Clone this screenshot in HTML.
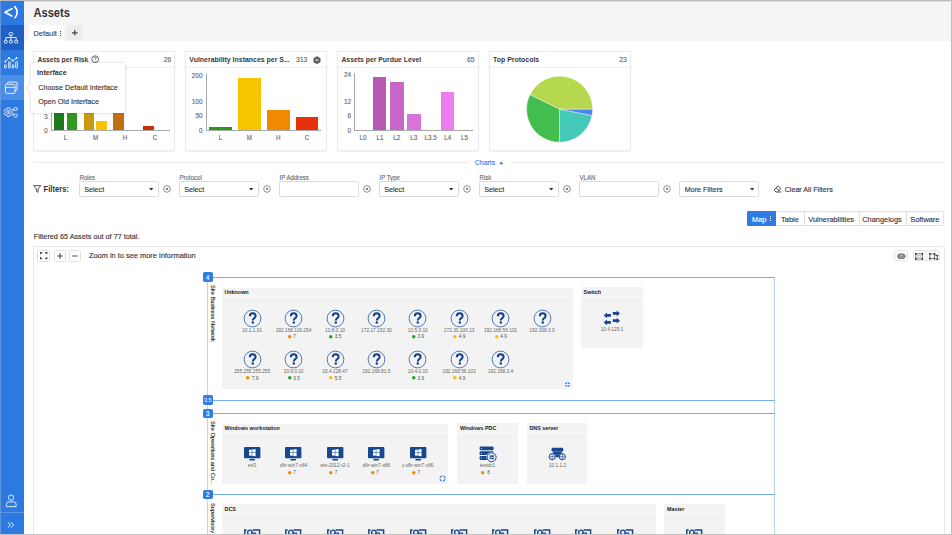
<!DOCTYPE html>
<html><head><meta charset="utf-8"><style>
html,body{margin:0;padding:0;width:952px;height:535px;overflow:hidden;background:#fff;position:relative;font-family:"Liberation Sans",sans-serif}
.t{position:absolute;white-space:nowrap;font-family:"Liberation Sans",sans-serif}
svg{overflow:visible}
</style></head><body>
<div style="position:absolute;left:23.30px;top:0.00px;width:930.00px;height:41.00px;background:#f5f5f5"></div>
<div style="position:absolute;left:0.00px;top:0.00px;width:23.60px;height:535.00px;background:#2c79e2"></div>
<div style="position:absolute;left:0.00px;top:25.00px;width:23.60px;height:25.00px;background:#1f60c4"></div>
<div style="position:absolute;left:0.00px;top:75.30px;width:23.60px;height:24.50px;background:#4a8ee8"></div>
<div style="position:absolute;left:0.00px;top:511.60px;width:23.60px;height:0.80px;background:#5a98ea"></div>
<div style="position:absolute;left:0.00px;top:0.00px;width:1.00px;height:535.00px;background:#5f97de"></div>
<div class="t" style="left:33.50px;top:8px;font-size:11.1px;line-height:11.1px;color:#333;font-weight:bold;transform:scaleY(1.16);transform-origin:0 9px;">Assets</div>
<div style="position:absolute;left:28.90px;top:25.20px;width:35.00px;height:16.30px;background:#fff"></div>
<div style="position:absolute;left:67.20px;top:25.20px;width:15.20px;height:15.30px;background:#ececec"></div>
<div class="t" style="left:33.50px;top:30px;font-size:7.4px;line-height:7.4px;color:#444;font-weight:normal;transform:scaleY(1.08);transform-origin:0 6px;-webkit-text-stroke:0.12px #444;">Default</div>
<div style="position:absolute;left:60.00px;top:31.00px;width:1.00px;height:1.00px;background:#444"></div>
<div style="position:absolute;left:60.00px;top:33.00px;width:1.00px;height:1.00px;background:#444"></div>
<div style="position:absolute;left:60.00px;top:35.00px;width:1.00px;height:1.00px;background:#444"></div>
<svg style="position:absolute;left:72.40px;top:30.40px;" width="6" height="6" viewBox="0 0 6 6"><path d="M2.8,0 V5.6 M0,2.8 H5.6" stroke="#444" stroke-width="1.2"/></svg>
<div style="position:absolute;left:33.00px;top:51.00px;width:142.00px;height:100.00px;background:#fff;border:1px solid #ebebeb;box-sizing:border-box;box-shadow:0 0.6px 1px rgba(0,0,0,0.06)"></div>
<div style="position:absolute;left:33.00px;top:67.00px;width:142.00px;height:1.00px;background:#efefef"></div>
<div class="t" style="left:37.40px;top:57px;font-size:6.8px;line-height:6.8px;color:#3a3a3a;font-weight:bold;transform:scaleY(1.08);transform-origin:0 5px;">Assets per Risk</div>
<div style="position:absolute;left:185.00px;top:51.00px;width:142.00px;height:100.00px;background:#fff;border:1px solid #ebebeb;box-sizing:border-box;box-shadow:0 0.6px 1px rgba(0,0,0,0.06)"></div>
<div style="position:absolute;left:185.00px;top:67.00px;width:142.00px;height:1.00px;background:#efefef"></div>
<div class="t" style="left:189.30px;top:57px;font-size:6.95px;line-height:6.95px;color:#3a3a3a;font-weight:bold;transform:scaleY(1.08);transform-origin:0 5px;">Vulnerability Instances per S...</div>
<div style="position:absolute;left:337.00px;top:51.00px;width:142.00px;height:100.00px;background:#fff;border:1px solid #ebebeb;box-sizing:border-box;box-shadow:0 0.6px 1px rgba(0,0,0,0.06)"></div>
<div style="position:absolute;left:337.00px;top:67.00px;width:142.00px;height:1.00px;background:#efefef"></div>
<div class="t" style="left:341.40px;top:57px;font-size:6.85px;line-height:6.85px;color:#3a3a3a;font-weight:bold;transform:scaleY(1.08);transform-origin:0 5px;">Assets per Purdue Level</div>
<div style="position:absolute;left:489.00px;top:51.00px;width:142.00px;height:100.00px;background:#fff;border:1px solid #ebebeb;box-sizing:border-box;box-shadow:0 0.6px 1px rgba(0,0,0,0.06)"></div>
<div style="position:absolute;left:489.00px;top:67.00px;width:142.00px;height:1.00px;background:#efefef"></div>
<div class="t" style="left:493.10px;top:57px;font-size:6.95px;line-height:6.95px;color:#3a3a3a;font-weight:bold;transform:scaleY(1.08);transform-origin:0 5px;">Top Protocols</div>
<div class="t" style="right:780.80px;top:57px;font-size:6.8px;line-height:6.8px;color:#666;font-weight:normal;transform:scaleY(1.08);transform-origin:0 5px;-webkit-text-stroke:0.12px #666;">26</div>
<div class="t" style="right:644.60px;top:57px;font-size:6.8px;line-height:6.8px;color:#666;font-weight:normal;transform:scaleY(1.08);transform-origin:0 5px;-webkit-text-stroke:0.12px #666;">313</div>
<div class="t" style="right:477.50px;top:57px;font-size:6.8px;line-height:6.8px;color:#666;font-weight:normal;transform:scaleY(1.08);transform-origin:0 5px;-webkit-text-stroke:0.12px #666;">65</div>
<div class="t" style="right:325.30px;top:57px;font-size:6.8px;line-height:6.8px;color:#666;font-weight:normal;transform:scaleY(1.08);transform-origin:0 5px;-webkit-text-stroke:0.12px #666;">23</div>
<svg style="position:absolute;left:90.50px;top:55.20px;" width="8.4" height="8.4" viewBox="0 0 8.4 8.4"><circle cx="4.2" cy="4.2" r="3.4" fill="none" stroke="#444" stroke-width="0.8"/><path d="M3.1,3.4 Q3.1,2.2 4.2,2.2 Q5.3,2.2 5.3,3.2 Q5.3,3.9 4.4,4.4 V5" fill="none" stroke="#444" stroke-width="0.75"/><circle cx="4.3" cy="6.1" r="0.45" fill="#444"/></svg>
<svg style="position:absolute;left:313.30px;top:55.80px;" width="8" height="8.4" viewBox="0 0 8 8.4"><path d="M4,0.3 L7.5,2.2 V6.2 L4,8.1 L0.5,6.2 V2.2Z" fill="#555"/><path d="M2.2,3.3 H5.8 M2.2,4.8 H5.8" stroke="#eee" stroke-width="0.7"/></svg>
<div style="position:absolute;left:50.60px;top:73.00px;width:0.80px;height:57.20px;background:#a8a8a8"></div>
<div style="position:absolute;left:50.60px;top:130.20px;width:119.10px;height:0.80px;background:#a8a8a8"></div>
<div style="position:absolute;left:54.00px;top:100.00px;width:10.20px;height:30.20px;background:#1e7a1e"></div>
<div style="position:absolute;left:66.50px;top:100.00px;width:10.30px;height:30.20px;background:#2f9a1f"></div>
<div style="position:absolute;left:83.80px;top:100.00px;width:10.20px;height:30.20px;background:#c99a10"></div>
<div style="position:absolute;left:96.00px;top:120.70px;width:10.60px;height:9.50px;background:#f5c400"></div>
<div style="position:absolute;left:113.20px;top:100.00px;width:10.60px;height:30.20px;background:#c07010"></div>
<div style="position:absolute;left:143.00px;top:125.70px;width:10.70px;height:4.50px;background:#c8300f"></div>
<div class="t" style="right:904.40px;top:128px;font-size:6.5px;line-height:6.5px;color:#666;font-weight:normal;transform:scaleY(1.08);transform-origin:0 5px;-webkit-text-stroke:0.12px #666;">0</div>
<div class="t" style="right:904.40px;top:114px;font-size:6.5px;line-height:6.5px;color:#666;font-weight:normal;transform:scaleY(1.08);transform-origin:0 5px;-webkit-text-stroke:0.12px #666;">3</div>
<div class="t" style="left:-134.60px;width:400px;text-align:center;top:135px;font-size:6.3px;line-height:6.3px;color:#666;font-weight:normal;transform:scaleY(1.08);transform-origin:0 5px;-webkit-text-stroke:0.12px #666;">L</div>
<div class="t" style="left:-104.40px;width:400px;text-align:center;top:135px;font-size:6.3px;line-height:6.3px;color:#666;font-weight:normal;transform:scaleY(1.08);transform-origin:0 5px;-webkit-text-stroke:0.12px #666;">M</div>
<div class="t" style="left:-75.00px;width:400px;text-align:center;top:135px;font-size:6.3px;line-height:6.3px;color:#666;font-weight:normal;transform:scaleY(1.08);transform-origin:0 5px;-webkit-text-stroke:0.12px #666;">H</div>
<div class="t" style="left:-45.00px;width:400px;text-align:center;top:135px;font-size:6.3px;line-height:6.3px;color:#666;font-weight:normal;transform:scaleY(1.08);transform-origin:0 5px;-webkit-text-stroke:0.12px #666;">C</div>
<div style="position:absolute;left:205.90px;top:73.80px;width:0.80px;height:56.40px;background:#a8a8a8"></div>
<div style="position:absolute;left:205.90px;top:130.20px;width:115.50px;height:0.80px;background:#a8a8a8"></div>
<div style="position:absolute;left:209.20px;top:126.60px;width:22.60px;height:3.60px;background:#2a9a1a"></div>
<div style="position:absolute;left:238.00px;top:77.90px;width:22.70px;height:52.30px;background:#f6c500"></div>
<div style="position:absolute;left:267.00px;top:109.70px;width:22.50px;height:20.50px;background:#f08a00"></div>
<div style="position:absolute;left:295.70px;top:116.90px;width:22.60px;height:13.30px;background:#e8300a"></div>
<div class="t" style="right:749.40px;top:73px;font-size:6.5px;line-height:6.5px;color:#666;font-weight:normal;transform:scaleY(1.08);transform-origin:0 5px;-webkit-text-stroke:0.12px #666;">200</div>
<div class="t" style="right:749.40px;top:99px;font-size:6.5px;line-height:6.5px;color:#666;font-weight:normal;transform:scaleY(1.08);transform-origin:0 5px;-webkit-text-stroke:0.12px #666;">100</div>
<div class="t" style="right:749.40px;top:113px;font-size:6.5px;line-height:6.5px;color:#666;font-weight:normal;transform:scaleY(1.08);transform-origin:0 5px;-webkit-text-stroke:0.12px #666;">50</div>
<div class="t" style="right:749.40px;top:128px;font-size:6.5px;line-height:6.5px;color:#666;font-weight:normal;transform:scaleY(1.08);transform-origin:0 5px;-webkit-text-stroke:0.12px #666;">0</div>
<div class="t" style="left:20.50px;width:400px;text-align:center;top:135px;font-size:6.3px;line-height:6.3px;color:#666;font-weight:normal;transform:scaleY(1.08);transform-origin:0 5px;-webkit-text-stroke:0.12px #666;">L</div>
<div class="t" style="left:49.30px;width:400px;text-align:center;top:135px;font-size:6.3px;line-height:6.3px;color:#666;font-weight:normal;transform:scaleY(1.08);transform-origin:0 5px;-webkit-text-stroke:0.12px #666;">M</div>
<div class="t" style="left:78.20px;width:400px;text-align:center;top:135px;font-size:6.3px;line-height:6.3px;color:#666;font-weight:normal;transform:scaleY(1.08);transform-origin:0 5px;-webkit-text-stroke:0.12px #666;">H</div>
<div class="t" style="left:107.00px;width:400px;text-align:center;top:135px;font-size:6.3px;line-height:6.3px;color:#666;font-weight:normal;transform:scaleY(1.08);transform-origin:0 5px;-webkit-text-stroke:0.12px #666;">C</div>
<div style="position:absolute;left:354.30px;top:72.70px;width:0.80px;height:57.50px;background:#a8a8a8"></div>
<div style="position:absolute;left:354.30px;top:130.20px;width:118.90px;height:0.80px;background:#a8a8a8"></div>
<div style="position:absolute;left:373.10px;top:77.30px;width:13.40px;height:52.90px;background:#b55bb5"></div>
<div style="position:absolute;left:390.20px;top:82.20px;width:13.40px;height:48.00px;background:#c765c8"></div>
<div style="position:absolute;left:407.30px;top:113.80px;width:13.30px;height:16.40px;background:#d873d8"></div>
<div style="position:absolute;left:441.20px;top:91.80px;width:13.30px;height:38.40px;background:#f07df0"></div>
<div class="t" style="right:600.80px;top:72px;font-size:6.5px;line-height:6.5px;color:#666;font-weight:normal;transform:scaleY(1.08);transform-origin:0 5px;-webkit-text-stroke:0.12px #666;">24</div>
<div class="t" style="right:600.80px;top:99px;font-size:6.5px;line-height:6.5px;color:#666;font-weight:normal;transform:scaleY(1.08);transform-origin:0 5px;-webkit-text-stroke:0.12px #666;">12</div>
<div class="t" style="right:600.80px;top:113px;font-size:6.5px;line-height:6.5px;color:#666;font-weight:normal;transform:scaleY(1.08);transform-origin:0 5px;-webkit-text-stroke:0.12px #666;">6</div>
<div class="t" style="right:600.80px;top:128px;font-size:6.5px;line-height:6.5px;color:#666;font-weight:normal;transform:scaleY(1.08);transform-origin:0 5px;-webkit-text-stroke:0.12px #666;">0</div>
<div class="t" style="left:162.90px;width:400px;text-align:center;top:135px;font-size:6.3px;line-height:6.3px;color:#666;font-weight:normal;transform:scaleY(1.08);transform-origin:0 5px;-webkit-text-stroke:0.12px #666;">L0</div>
<div class="t" style="left:180.00px;width:400px;text-align:center;top:135px;font-size:6.3px;line-height:6.3px;color:#666;font-weight:normal;transform:scaleY(1.08);transform-origin:0 5px;-webkit-text-stroke:0.12px #666;">L1</div>
<div class="t" style="left:196.80px;width:400px;text-align:center;top:135px;font-size:6.3px;line-height:6.3px;color:#666;font-weight:normal;transform:scaleY(1.08);transform-origin:0 5px;-webkit-text-stroke:0.12px #666;">L2</div>
<div class="t" style="left:213.80px;width:400px;text-align:center;top:135px;font-size:6.3px;line-height:6.3px;color:#666;font-weight:normal;transform:scaleY(1.08);transform-origin:0 5px;-webkit-text-stroke:0.12px #666;">L3</div>
<div class="t" style="left:230.70px;width:400px;text-align:center;top:135px;font-size:6.3px;line-height:6.3px;color:#666;font-weight:normal;transform:scaleY(1.08);transform-origin:0 5px;-webkit-text-stroke:0.12px #666;">L3.5</div>
<div class="t" style="left:247.70px;width:400px;text-align:center;top:135px;font-size:6.3px;line-height:6.3px;color:#666;font-weight:normal;transform:scaleY(1.08);transform-origin:0 5px;-webkit-text-stroke:0.12px #666;">L4</div>
<div class="t" style="left:264.60px;width:400px;text-align:center;top:135px;font-size:6.3px;line-height:6.3px;color:#666;font-weight:normal;transform:scaleY(1.08);transform-origin:0 5px;-webkit-text-stroke:0.12px #666;">L5</div>
<svg style="position:absolute;left:0;top:0" width="952" height="535"><path d="M559.6,109.2 L592.60,109.20 A33,33 0 0 0 529.94,94.73 Z" fill="#b5d84f" stroke="#fff" stroke-width="0.4"/><path d="M559.6,109.2 L529.94,94.73 A33,33 0 0 0 559.60,142.20 Z" fill="#43bd4e" stroke="#fff" stroke-width="0.4"/><path d="M559.6,109.2 L559.60,142.20 A33,33 0 0 0 591.99,115.50 Z" fill="#44c9b9" stroke="#fff" stroke-width="0.4"/><path d="M559.6,109.2 L591.99,115.50 A33,33 0 0 0 592.60,109.20 Z" fill="#4a86f0" stroke="#fff" stroke-width="0.4"/></svg>
<div style="position:absolute;left:30.8px;top:62.8px;width:94.2px;height:50.1px;background:#fff;box-shadow:0 0 3px rgba(0,0,0,0.22);border-radius:1px"></div>
<div style="position:absolute;left:27.6px;top:84.8px;width:5.6px;height:5.6px;background:#fff;transform:rotate(45deg);box-shadow:-0.8px 0.8px 1.2px rgba(0,0,0,0.12)"></div>
<div style="position:absolute;left:30.80px;top:80.00px;width:6.00px;height:15.00px;background:#fff"></div>
<div class="t" style="left:37.10px;top:70px;font-size:7.1px;line-height:7.1px;color:#333;font-weight:bold;transform:scaleY(1.08);transform-origin:0 5px;">Interface</div>
<div class="t" style="left:38.20px;top:84px;font-size:7.2px;line-height:7.2px;color:#333;font-weight:normal;transform:scaleY(1.08);transform-origin:0 6px;-webkit-text-stroke:0.12px #333;">Choose Default Interface</div>
<div class="t" style="left:38.20px;top:98px;font-size:7.2px;line-height:7.2px;color:#333;font-weight:normal;transform:scaleY(1.08);transform-origin:0 6px;-webkit-text-stroke:0.12px #333;">Open Old Interface</div>
<div style="position:absolute;left:33.50px;top:161.50px;width:434.00px;height:0.80px;background:#ededed"></div>
<div style="position:absolute;left:510.00px;top:161.50px;width:433.50px;height:0.80px;background:#ededed"></div>
<div class="t" style="left:474.70px;top:159px;font-size:7.0px;line-height:7.0px;color:#2f7de1;font-weight:normal;transform:scaleY(1.08);transform-origin:0 6px;-webkit-text-stroke:0.12px #2f7de1;">Charts</div>
<svg style="position:absolute;left:499.00px;top:161.20px;" width="5" height="4" viewBox="0 0 5 4"><path d="M0.2,3.2 L2.3,0.6 L4.4,3.2Z" fill="#2f7de1"/></svg>
<svg style="position:absolute;left:33.40px;top:185.00px;" width="9" height="8" viewBox="0 0 9 8"><path d="M0.6,0.6 H7.8 L5,4 V7.3 L3.4,6.3 V4 Z" fill="none" stroke="#444" stroke-width="0.9" stroke-linejoin="round"/></svg>
<div class="t" style="left:43.50px;top:186px;font-size:7.65px;line-height:7.65px;color:#333;font-weight:bold;transform:scaleY(1.08);transform-origin:0 6px;">Filters:</div>
<div class="t" style="left:79.50px;top:175px;font-size:6.1px;line-height:6.1px;color:#6a6a6a;font-weight:normal;transform:scaleY(1.08);transform-origin:0 5px;-webkit-text-stroke:0.12px #6a6a6a;">Roles</div>
<div style="position:absolute;left:79.10px;top:181.40px;width:79.50px;height:15.40px;background:#fff;border:1px solid #dcdcdc;box-sizing:border-box;border-radius:1.5px"></div>
<div class="t" style="left:84.20px;top:186px;font-size:7.2px;line-height:7.2px;color:#333;font-weight:normal;transform:scaleY(1.08);transform-origin:0 6px;-webkit-text-stroke:0.12px #333;">Select</div>
<svg style="position:absolute;left:149.40px;top:188.20px;" width="5" height="3" viewBox="0 0 5 3"><path d="M0,0 H4.4 L2.2,2.6Z" fill="#333"/></svg>
<svg style="position:absolute;left:163.40px;top:185.00px;" width="8" height="8" viewBox="0 0 8 8"><circle cx="4" cy="4" r="3.3" fill="none" stroke="#666" stroke-width="0.75"/><circle cx="4" cy="4" r="1.1" fill="#666"/></svg>
<div class="t" style="left:179.50px;top:175px;font-size:6.1px;line-height:6.1px;color:#6a6a6a;font-weight:normal;transform:scaleY(1.08);transform-origin:0 5px;-webkit-text-stroke:0.12px #6a6a6a;">Protocol</div>
<div style="position:absolute;left:179.10px;top:181.40px;width:79.50px;height:15.40px;background:#fff;border:1px solid #dcdcdc;box-sizing:border-box;border-radius:1.5px"></div>
<div class="t" style="left:184.20px;top:186px;font-size:7.2px;line-height:7.2px;color:#333;font-weight:normal;transform:scaleY(1.08);transform-origin:0 6px;-webkit-text-stroke:0.12px #333;">Select</div>
<svg style="position:absolute;left:249.40px;top:188.20px;" width="5" height="3" viewBox="0 0 5 3"><path d="M0,0 H4.4 L2.2,2.6Z" fill="#333"/></svg>
<svg style="position:absolute;left:263.40px;top:185.00px;" width="8" height="8" viewBox="0 0 8 8"><circle cx="4" cy="4" r="3.3" fill="none" stroke="#666" stroke-width="0.75"/><circle cx="4" cy="4" r="1.1" fill="#666"/></svg>
<div class="t" style="left:279.50px;top:175px;font-size:6.1px;line-height:6.1px;color:#6a6a6a;font-weight:normal;transform:scaleY(1.08);transform-origin:0 5px;-webkit-text-stroke:0.12px #6a6a6a;">IP Address</div>
<div style="position:absolute;left:279.10px;top:181.40px;width:79.50px;height:15.40px;background:#fff;border:1px solid #dcdcdc;box-sizing:border-box;border-radius:1.5px"></div>
<svg style="position:absolute;left:363.40px;top:185.00px;" width="8" height="8" viewBox="0 0 8 8"><circle cx="4" cy="4" r="3.3" fill="none" stroke="#666" stroke-width="0.75"/><circle cx="4" cy="4" r="1.1" fill="#666"/></svg>
<div class="t" style="left:379.50px;top:175px;font-size:6.1px;line-height:6.1px;color:#6a6a6a;font-weight:normal;transform:scaleY(1.08);transform-origin:0 5px;-webkit-text-stroke:0.12px #6a6a6a;">IP Type</div>
<div style="position:absolute;left:379.10px;top:181.40px;width:79.50px;height:15.40px;background:#fff;border:1px solid #dcdcdc;box-sizing:border-box;border-radius:1.5px"></div>
<div class="t" style="left:384.20px;top:186px;font-size:7.2px;line-height:7.2px;color:#333;font-weight:normal;transform:scaleY(1.08);transform-origin:0 6px;-webkit-text-stroke:0.12px #333;">Select</div>
<svg style="position:absolute;left:449.40px;top:188.20px;" width="5" height="3" viewBox="0 0 5 3"><path d="M0,0 H4.4 L2.2,2.6Z" fill="#333"/></svg>
<svg style="position:absolute;left:463.40px;top:185.00px;" width="8" height="8" viewBox="0 0 8 8"><circle cx="4" cy="4" r="3.3" fill="none" stroke="#666" stroke-width="0.75"/><circle cx="4" cy="4" r="1.1" fill="#666"/></svg>
<div class="t" style="left:479.50px;top:175px;font-size:6.1px;line-height:6.1px;color:#6a6a6a;font-weight:normal;transform:scaleY(1.08);transform-origin:0 5px;-webkit-text-stroke:0.12px #6a6a6a;">Risk</div>
<div style="position:absolute;left:479.10px;top:181.40px;width:79.50px;height:15.40px;background:#fff;border:1px solid #dcdcdc;box-sizing:border-box;border-radius:1.5px"></div>
<div class="t" style="left:484.20px;top:186px;font-size:7.2px;line-height:7.2px;color:#333;font-weight:normal;transform:scaleY(1.08);transform-origin:0 6px;-webkit-text-stroke:0.12px #333;">Select</div>
<svg style="position:absolute;left:549.40px;top:188.20px;" width="5" height="3" viewBox="0 0 5 3"><path d="M0,0 H4.4 L2.2,2.6Z" fill="#333"/></svg>
<svg style="position:absolute;left:563.40px;top:185.00px;" width="8" height="8" viewBox="0 0 8 8"><circle cx="4" cy="4" r="3.3" fill="none" stroke="#666" stroke-width="0.75"/><circle cx="4" cy="4" r="1.1" fill="#666"/></svg>
<div class="t" style="left:579.50px;top:175px;font-size:6.1px;line-height:6.1px;color:#6a6a6a;font-weight:normal;transform:scaleY(1.08);transform-origin:0 5px;-webkit-text-stroke:0.12px #6a6a6a;">VLAN</div>
<div style="position:absolute;left:579.10px;top:181.40px;width:79.50px;height:15.40px;background:#fff;border:1px solid #dcdcdc;box-sizing:border-box;border-radius:1.5px"></div>
<svg style="position:absolute;left:663.40px;top:185.00px;" width="8" height="8" viewBox="0 0 8 8"><circle cx="4" cy="4" r="3.3" fill="none" stroke="#666" stroke-width="0.75"/><circle cx="4" cy="4" r="1.1" fill="#666"/></svg>
<div style="position:absolute;left:679.40px;top:181.40px;width:79.40px;height:15.40px;background:#fff;border:1px solid #dcdcdc;box-sizing:border-box;border-radius:1.5px"></div>
<div class="t" style="left:684.70px;top:186px;font-size:7.2px;line-height:7.2px;color:#333;font-weight:normal;transform:scaleY(1.08);transform-origin:0 6px;-webkit-text-stroke:0.12px #333;">More Filters</div>
<svg style="position:absolute;left:749.70px;top:188.20px;" width="5" height="3" viewBox="0 0 5 3"><path d="M0,0 H4.4 L2.2,2.6Z" fill="#333"/></svg>
<svg style="position:absolute;left:773.00px;top:185.00px;" width="9" height="8" viewBox="0 0 9 8"><path d="M5.1,0.9 L7.9,3.6 L4.4,7 H3.1 L1.1,5 Z M3.1,2.9 L6,5.6 M4.4,7 H8.2" fill="none" stroke="#444" stroke-width="0.95" stroke-linejoin="round"/></svg>
<div class="t" style="left:784.70px;top:187px;font-size:7.15px;line-height:7.15px;color:#333;font-weight:normal;transform:scaleY(1.08);transform-origin:0 5px;-webkit-text-stroke:0.12px #333;">Clear All Filters</div>
<div class="t" style="left:33.70px;top:233px;font-size:7.28px;line-height:7.28px;color:#333;font-weight:normal;transform:scaleY(1.08);transform-origin:0 6px;-webkit-text-stroke:0.12px #333;">Filtered 65 Assets out of 77 total.</div>
<div style="position:absolute;left:746.70px;top:211.20px;width:197.50px;height:15.00px;background:#fff;border:1px solid #e0e0e0;box-sizing:border-box;border-radius:1.5px"></div>
<div style="position:absolute;left:746.70px;top:211.20px;width:29.30px;height:15.00px;background:#2d7be4;border-radius:1.5px 0 0 1.5px"></div>
<div style="position:absolute;left:803.90px;top:211.20px;width:0.80px;height:15.00px;background:#e0e0e0"></div>
<div style="position:absolute;left:858.50px;top:211.20px;width:0.80px;height:15.00px;background:#e0e0e0"></div>
<div style="position:absolute;left:905.50px;top:211.20px;width:0.80px;height:15.00px;background:#e0e0e0"></div>
<div class="t" style="left:752.00px;top:216px;font-size:7.4px;line-height:7.4px;color:#fff;font-weight:normal;transform:scaleY(1.08);transform-origin:0 6px;-webkit-text-stroke:0.12px #fff;">Map</div>
<div style="position:absolute;left:770.00px;top:216.20px;width:1.00px;height:1.00px;background:#fff"></div>
<div style="position:absolute;left:770.00px;top:218.20px;width:1.00px;height:1.00px;background:#fff"></div>
<div style="position:absolute;left:770.00px;top:220.20px;width:1.00px;height:1.00px;background:#fff"></div>
<div class="t" style="left:589.95px;width:400px;text-align:center;top:216px;font-size:7.4px;line-height:7.4px;color:#333;font-weight:normal;transform:scaleY(1.08);transform-origin:0 6px;-webkit-text-stroke:0.12px #333;">Table</div>
<div class="t" style="left:631.20px;width:400px;text-align:center;top:216px;font-size:7.4px;line-height:7.4px;color:#333;font-weight:normal;transform:scaleY(1.08);transform-origin:0 6px;-webkit-text-stroke:0.12px #333;">Vulnerabilities</div>
<div class="t" style="left:682.00px;width:400px;text-align:center;top:216px;font-size:7.4px;line-height:7.4px;color:#333;font-weight:normal;transform:scaleY(1.08);transform-origin:0 6px;-webkit-text-stroke:0.12px #333;">Changelogs</div>
<div class="t" style="left:724.85px;width:400px;text-align:center;top:216px;font-size:7.4px;line-height:7.4px;color:#333;font-weight:normal;transform:scaleY(1.08);transform-origin:0 6px;-webkit-text-stroke:0.12px #333;">Software</div>
<div style="position:absolute;left:33.00px;top:246.20px;width:911.70px;height:300.00px;background:#fff;border:1px solid #e6e6e6;box-sizing:border-box;border-radius:2px"></div>
<div style="position:absolute;left:37.30px;top:250.40px;width:12.50px;height:11.30px;background:#fff;border:1px solid #e0e0e0;box-sizing:border-box;border-radius:1.5px"></div>
<div style="position:absolute;left:53.70px;top:250.40px;width:12.50px;height:11.30px;background:#fff;border:1px solid #e0e0e0;box-sizing:border-box;border-radius:1.5px"></div>
<div style="position:absolute;left:69.20px;top:250.40px;width:11.60px;height:11.30px;background:#fff;border:1px solid #e0e0e0;box-sizing:border-box;border-radius:1.5px"></div>
<svg style="position:absolute;left:40.20px;top:252.40px;" width="7.4" height="7.4" viewBox="0 0 7.4 7.4"><path d="M0.6,2.3 V0.6 H2.3 M5.1,0.6 H6.8 V2.3 M6.8,5.1 V6.8 H5.1 M2.3,6.8 H0.6 V5.1" fill="none" stroke="#444" stroke-width="1.15"/></svg>
<svg style="position:absolute;left:56.00px;top:251.90px;" width="8" height="8" viewBox="0 0 8 8"><path d="M4,1.2 V6.8 M1.2,4 H6.8" stroke="#444" stroke-width="1.1"/></svg>
<svg style="position:absolute;left:71.30px;top:251.90px;" width="8" height="8" viewBox="0 0 8 8"><path d="M1.3,4 H6.6" stroke="#555" stroke-width="1.1"/></svg>
<div class="t" style="left:88.90px;top:252px;font-size:7.43px;line-height:7.43px;color:#333;font-weight:normal;transform:scaleY(1.08);transform-origin:0 6px;-webkit-text-stroke:0.12px #333;">Zoom in to see more information</div>
<div style="position:absolute;left:894.30px;top:250.20px;width:13.90px;height:11.30px;background:#fff;border:1px solid #e4e4e4;box-sizing:border-box;border-radius:1.5px"></div>
<div style="position:absolute;left:912.50px;top:250.20px;width:27.50px;height:11.30px;background:#fff;border:1px solid #e4e4e4;box-sizing:border-box;border-radius:1.5px"></div>
<div style="position:absolute;left:925.50px;top:250.20px;width:0.70px;height:11.30px;background:#e4e4e4"></div>
<svg style="position:absolute;left:896.80px;top:252.80px;" width="9" height="7" viewBox="0 0 9 7"><ellipse cx="4.4" cy="3.2" rx="4.1" ry="2.9" fill="#7a7a7a"/><circle cx="4.4" cy="3.2" r="1.6" fill="#d8d8d8"/><circle cx="4.4" cy="3.2" r="0.8" fill="#333"/></svg>
<svg style="position:absolute;left:915.00px;top:252.80px;" width="8.5" height="7" viewBox="0 0 8.5 7"><rect x="0.8" y="0.8" width="6.6" height="5.2" fill="none" stroke="#666" stroke-width="0.8"/><path d="M2.4,2.3 H5.8 V4.5 H2.4Z" fill="none" stroke="#999" stroke-width="0.6"/><g fill="#333"><rect x="0" y="0" width="1.7" height="1.7"/><rect x="6.5" y="0" width="1.7" height="1.7"/><rect x="0" y="5.1" width="1.7" height="1.7"/><rect x="6.5" y="5.1" width="1.7" height="1.7"/></g></svg>
<svg style="position:absolute;left:928.60px;top:252.80px;" width="9.5" height="7" viewBox="0 0 9.5 7"><path d="M1,1 H5.5 V5.5 H1Z M5.5,2.5 H8.2 V6.2" fill="none" stroke="#666" stroke-width="0.8"/><g fill="#333"><rect x="0" y="0" width="1.7" height="1.7"/><rect x="4.7" y="0" width="1.7" height="1.7"/><rect x="0" y="4.8" width="1.7" height="1.7"/><rect x="7.5" y="1.7" width="1.7" height="1.7"/><rect x="7.5" y="5.3" width="1.7" height="1.7"/><rect x="4.7" y="4.8" width="1.7" height="1.7"/></g></svg>
<div style="position:absolute;left:206.90px;top:277.60px;width:1.30px;height:260.00px;background:#b9d4f7"></div>
<div style="position:absolute;left:773.90px;top:277.60px;width:1.40px;height:260.00px;background:#b9d4f7"></div>
<div style="position:absolute;left:207.30px;top:276.90px;width:567.70px;height:1.00px;background:#76a9ee"></div>
<div style="position:absolute;left:207.30px;top:399.80px;width:567.70px;height:1.00px;background:#76a9ee"></div>
<div style="position:absolute;left:207.30px;top:412.70px;width:567.70px;height:1.00px;background:#76a9ee"></div>
<div style="position:absolute;left:207.30px;top:493.90px;width:567.70px;height:1.00px;background:#76a9ee"></div>
<div style="position:absolute;left:202.70px;top:272.20px;width:9.90px;height:9.80px;background:#2f7de5;border-radius:1.8px"></div>
<div class="t" style="left:7.70px;width:400px;text-align:center;top:275px;font-size:6px;line-height:6px;color:#fff;font-weight:normal;transform:scaleY(1.08);transform-origin:0 5px;-webkit-text-stroke:0.12px #fff;">4</div>
<div style="position:absolute;left:202.70px;top:395.10px;width:9.90px;height:9.80px;background:#2f7de5;border-radius:1.8px"></div>
<div class="t" style="left:7.70px;width:400px;text-align:center;top:398px;font-size:5.4px;line-height:5.4px;color:#fff;font-weight:normal;transform:scaleY(1.08);transform-origin:0 4px;">3.5</div>
<div style="position:absolute;left:202.70px;top:408.50px;width:9.90px;height:9.80px;background:#2f7de5;border-radius:1.8px"></div>
<div class="t" style="left:7.70px;width:400px;text-align:center;top:411px;font-size:6px;line-height:6px;color:#fff;font-weight:normal;transform:scaleY(1.08);transform-origin:0 5px;-webkit-text-stroke:0.12px #fff;">3</div>
<div style="position:absolute;left:202.70px;top:489.60px;width:9.90px;height:9.80px;background:#2f7de5;border-radius:1.8px"></div>
<div class="t" style="left:7.70px;width:400px;text-align:center;top:492px;font-size:6px;line-height:6px;color:#fff;font-weight:normal;transform:scaleY(1.08);transform-origin:0 5px;-webkit-text-stroke:0.12px #fff;">2</div>
<div class="t" style="left:214.8px;top:285.2px;font-size:5.7px;line-height:5.7px;color:#111;-webkit-text-stroke:0.1px #111;transform-origin:0 0;transform:rotate(90deg);">Site Business Network</div>
<div class="t" style="left:214.8px;top:421.4px;font-size:5.7px;line-height:5.7px;color:#111;-webkit-text-stroke:0.1px #111;transform-origin:0 0;transform:rotate(90deg);">Site Operations and Co...</div>
<div class="t" style="left:214.8px;top:502.6px;font-size:5.7px;line-height:5.7px;color:#111;-webkit-text-stroke:0.1px #111;transform-origin:0 0;transform:rotate(90deg);">Supervisory</div>
<div style="position:absolute;left:221.80px;top:287.60px;width:350.90px;height:101.90px;background:#f3f3f3"></div>
<div style="position:absolute;left:221.80px;top:296.40px;width:350.90px;height:0.90px;background:#fafafa"></div>
<div class="t" style="left:224.40px;top:290px;font-size:5.4px;line-height:5.4px;color:#222;font-weight:bold;transform:scaleY(1.08);transform-origin:0 4px;">Unknown</div>
<div style="position:absolute;left:581.00px;top:287.40px;width:61.50px;height:61.10px;background:#f3f3f3"></div>
<div style="position:absolute;left:581.00px;top:296.20px;width:61.50px;height:0.90px;background:#fafafa"></div>
<div class="t" style="left:583.60px;top:290px;font-size:5.4px;line-height:5.4px;color:#222;font-weight:bold;transform:scaleY(1.08);transform-origin:0 4px;">Switch</div>
<div style="position:absolute;left:221.90px;top:423.50px;width:226.40px;height:60.60px;background:#f3f3f3"></div>
<div style="position:absolute;left:221.90px;top:432.30px;width:226.40px;height:0.90px;background:#fafafa"></div>
<div class="t" style="left:224.50px;top:426px;font-size:5.4px;line-height:5.4px;color:#222;font-weight:bold;transform:scaleY(1.08);transform-origin:0 4px;">Windows workstation</div>
<div style="position:absolute;left:457.30px;top:423.20px;width:60.70px;height:60.60px;background:#f3f3f3"></div>
<div style="position:absolute;left:457.30px;top:432.00px;width:60.70px;height:0.90px;background:#fafafa"></div>
<div class="t" style="left:459.90px;top:426px;font-size:5.4px;line-height:5.4px;color:#222;font-weight:bold;transform:scaleY(1.08);transform-origin:0 4px;">Windows PDC</div>
<div style="position:absolute;left:526.80px;top:423.20px;width:60.60px;height:60.60px;background:#f3f3f3"></div>
<div style="position:absolute;left:526.80px;top:432.00px;width:60.60px;height:0.90px;background:#fafafa"></div>
<div class="t" style="left:529.40px;top:426px;font-size:5.4px;line-height:5.4px;color:#222;font-weight:bold;transform:scaleY(1.08);transform-origin:0 4px;">DNS server</div>
<div style="position:absolute;left:221.90px;top:504.30px;width:433.90px;height:95.70px;background:#f3f3f3"></div>
<div style="position:absolute;left:221.90px;top:513.10px;width:433.90px;height:0.90px;background:#fafafa"></div>
<div class="t" style="left:224.50px;top:507px;font-size:5.4px;line-height:5.4px;color:#222;font-weight:bold;transform:scaleY(1.08);transform-origin:0 4px;">DCS</div>
<div style="position:absolute;left:664.30px;top:504.30px;width:60.70px;height:95.70px;background:#f3f3f3"></div>
<div style="position:absolute;left:664.30px;top:513.10px;width:60.70px;height:0.90px;background:#fafafa"></div>
<div class="t" style="left:666.90px;top:507px;font-size:5.4px;line-height:5.4px;color:#222;font-weight:bold;transform:scaleY(1.08);transform-origin:0 4px;">Master</div>
<svg style="position:absolute;left:242.70px;top:308.70px;" width="19" height="19" viewBox="0 0 19 19"><circle cx="9.5" cy="9.5" r="8.4" fill="none" stroke="#4471b0" stroke-width="0.95"/><path d="M6.8,7.3 Q6.8,4.3 9.7,4.3 Q12.6,4.3 12.6,6.9 Q12.6,8.4 11,9.3 Q9.8,10 9.8,11.6" fill="none" stroke="#0f3f8a" stroke-width="2"/><circle cx="9.8" cy="13.5" r="1.2" fill="#0f3f8a"/></svg>
<div class="t" style="left:52.20px;width:400px;text-align:center;top:329px;font-size:4.8px;line-height:4.8px;color:#666;font-weight:normal;transform:scaleY(1.08);transform-origin:0 3px;">10.1.1.91</div>
<svg style="position:absolute;left:284.00px;top:308.70px;" width="19" height="19" viewBox="0 0 19 19"><circle cx="9.5" cy="9.5" r="8.4" fill="none" stroke="#4471b0" stroke-width="0.95"/><path d="M6.8,7.3 Q6.8,4.3 9.7,4.3 Q12.6,4.3 12.6,6.9 Q12.6,8.4 11,9.3 Q9.8,10 9.8,11.6" fill="none" stroke="#0f3f8a" stroke-width="2"/><circle cx="9.8" cy="13.5" r="1.2" fill="#0f3f8a"/></svg>
<div class="t" style="left:93.50px;width:400px;text-align:center;top:329px;font-size:4.8px;line-height:4.8px;color:#666;font-weight:normal;transform:scaleY(1.08);transform-origin:0 3px;">192.168.116.254</div>
<svg style="position:absolute;left:287.75px;top:334.75px;" width="3.5" height="3.5" viewBox="0 0 3.5 3.5"><circle cx="1.75" cy="1.75" r="1.75" fill="#f08c00"/></svg>
<div class="t" style="left:293.15px;top:335px;font-size:4.8px;line-height:4.8px;color:#555;font-weight:normal;transform:scaleY(1.08);transform-origin:0 3px;">7</div>
<svg style="position:absolute;left:325.50px;top:308.70px;" width="19" height="19" viewBox="0 0 19 19"><circle cx="9.5" cy="9.5" r="8.4" fill="none" stroke="#4471b0" stroke-width="0.95"/><path d="M6.8,7.3 Q6.8,4.3 9.7,4.3 Q12.6,4.3 12.6,6.9 Q12.6,8.4 11,9.3 Q9.8,10 9.8,11.6" fill="none" stroke="#0f3f8a" stroke-width="2"/><circle cx="9.8" cy="13.5" r="1.2" fill="#0f3f8a"/></svg>
<div class="t" style="left:135.00px;width:400px;text-align:center;top:329px;font-size:4.8px;line-height:4.8px;color:#666;font-weight:normal;transform:scaleY(1.08);transform-origin:0 3px;">10.8.0.10</div>
<svg style="position:absolute;left:329.25px;top:334.75px;" width="3.5" height="3.5" viewBox="0 0 3.5 3.5"><circle cx="1.75" cy="1.75" r="1.75" fill="#2c9a2c"/></svg>
<div class="t" style="left:334.65px;top:335px;font-size:4.8px;line-height:4.8px;color:#555;font-weight:normal;transform:scaleY(1.08);transform-origin:0 3px;">3.5</div>
<svg style="position:absolute;left:366.90px;top:308.70px;" width="19" height="19" viewBox="0 0 19 19"><circle cx="9.5" cy="9.5" r="8.4" fill="none" stroke="#4471b0" stroke-width="0.95"/><path d="M6.8,7.3 Q6.8,4.3 9.7,4.3 Q12.6,4.3 12.6,6.9 Q12.6,8.4 11,9.3 Q9.8,10 9.8,11.6" fill="none" stroke="#0f3f8a" stroke-width="2"/><circle cx="9.8" cy="13.5" r="1.2" fill="#0f3f8a"/></svg>
<div class="t" style="left:176.40px;width:400px;text-align:center;top:329px;font-size:4.8px;line-height:4.8px;color:#666;font-weight:normal;transform:scaleY(1.08);transform-origin:0 3px;">172.17.152.30</div>
<svg style="position:absolute;left:408.30px;top:308.70px;" width="19" height="19" viewBox="0 0 19 19"><circle cx="9.5" cy="9.5" r="8.4" fill="none" stroke="#4471b0" stroke-width="0.95"/><path d="M6.8,7.3 Q6.8,4.3 9.7,4.3 Q12.6,4.3 12.6,6.9 Q12.6,8.4 11,9.3 Q9.8,10 9.8,11.6" fill="none" stroke="#0f3f8a" stroke-width="2"/><circle cx="9.8" cy="13.5" r="1.2" fill="#0f3f8a"/></svg>
<div class="t" style="left:217.80px;width:400px;text-align:center;top:329px;font-size:4.8px;line-height:4.8px;color:#666;font-weight:normal;transform:scaleY(1.08);transform-origin:0 3px;">10.5.0.10</div>
<svg style="position:absolute;left:412.05px;top:334.75px;" width="3.5" height="3.5" viewBox="0 0 3.5 3.5"><circle cx="1.75" cy="1.75" r="1.75" fill="#2c9a2c"/></svg>
<div class="t" style="left:417.45px;top:335px;font-size:4.8px;line-height:4.8px;color:#555;font-weight:normal;transform:scaleY(1.08);transform-origin:0 3px;">3.9</div>
<svg style="position:absolute;left:449.70px;top:308.70px;" width="19" height="19" viewBox="0 0 19 19"><circle cx="9.5" cy="9.5" r="8.4" fill="none" stroke="#4471b0" stroke-width="0.95"/><path d="M6.8,7.3 Q6.8,4.3 9.7,4.3 Q12.6,4.3 12.6,6.9 Q12.6,8.4 11,9.3 Q9.8,10 9.8,11.6" fill="none" stroke="#0f3f8a" stroke-width="2"/><circle cx="9.8" cy="13.5" r="1.2" fill="#0f3f8a"/></svg>
<div class="t" style="left:259.20px;width:400px;text-align:center;top:329px;font-size:4.8px;line-height:4.8px;color:#666;font-weight:normal;transform:scaleY(1.08);transform-origin:0 3px;">172.30.100.13</div>
<svg style="position:absolute;left:453.45px;top:334.75px;" width="3.5" height="3.5" viewBox="0 0 3.5 3.5"><circle cx="1.75" cy="1.75" r="1.75" fill="#f5c000"/></svg>
<div class="t" style="left:458.85px;top:335px;font-size:4.8px;line-height:4.8px;color:#555;font-weight:normal;transform:scaleY(1.08);transform-origin:0 3px;">4.9</div>
<svg style="position:absolute;left:491.10px;top:308.70px;" width="19" height="19" viewBox="0 0 19 19"><circle cx="9.5" cy="9.5" r="8.4" fill="none" stroke="#4471b0" stroke-width="0.95"/><path d="M6.8,7.3 Q6.8,4.3 9.7,4.3 Q12.6,4.3 12.6,6.9 Q12.6,8.4 11,9.3 Q9.8,10 9.8,11.6" fill="none" stroke="#0f3f8a" stroke-width="2"/><circle cx="9.8" cy="13.5" r="1.2" fill="#0f3f8a"/></svg>
<div class="t" style="left:300.60px;width:400px;text-align:center;top:329px;font-size:4.8px;line-height:4.8px;color:#666;font-weight:normal;transform:scaleY(1.08);transform-origin:0 3px;">192.168.56.101</div>
<svg style="position:absolute;left:494.85px;top:334.75px;" width="3.5" height="3.5" viewBox="0 0 3.5 3.5"><circle cx="1.75" cy="1.75" r="1.75" fill="#f5c000"/></svg>
<div class="t" style="left:500.25px;top:335px;font-size:4.8px;line-height:4.8px;color:#555;font-weight:normal;transform:scaleY(1.08);transform-origin:0 3px;">4.9</div>
<svg style="position:absolute;left:532.50px;top:308.70px;" width="19" height="19" viewBox="0 0 19 19"><circle cx="9.5" cy="9.5" r="8.4" fill="none" stroke="#4471b0" stroke-width="0.95"/><path d="M6.8,7.3 Q6.8,4.3 9.7,4.3 Q12.6,4.3 12.6,6.9 Q12.6,8.4 11,9.3 Q9.8,10 9.8,11.6" fill="none" stroke="#0f3f8a" stroke-width="2"/><circle cx="9.8" cy="13.5" r="1.2" fill="#0f3f8a"/></svg>
<div class="t" style="left:342.00px;width:400px;text-align:center;top:329px;font-size:4.8px;line-height:4.8px;color:#666;font-weight:normal;transform:scaleY(1.08);transform-origin:0 3px;">192.168.3.0</div>
<svg style="position:absolute;left:242.70px;top:350.10px;" width="19" height="19" viewBox="0 0 19 19"><circle cx="9.5" cy="9.5" r="8.4" fill="none" stroke="#4471b0" stroke-width="0.95"/><path d="M6.8,7.3 Q6.8,4.3 9.7,4.3 Q12.6,4.3 12.6,6.9 Q12.6,8.4 11,9.3 Q9.8,10 9.8,11.6" fill="none" stroke="#0f3f8a" stroke-width="2"/><circle cx="9.8" cy="13.5" r="1.2" fill="#0f3f8a"/></svg>
<div class="t" style="left:52.20px;width:400px;text-align:center;top:370px;font-size:4.8px;line-height:4.8px;color:#666;font-weight:normal;transform:scaleY(1.08);transform-origin:0 3px;">255.255.255.255</div>
<svg style="position:absolute;left:246.45px;top:376.15px;" width="3.5" height="3.5" viewBox="0 0 3.5 3.5"><circle cx="1.75" cy="1.75" r="1.75" fill="#f08c00"/></svg>
<div class="t" style="left:251.85px;top:377px;font-size:4.8px;line-height:4.8px;color:#555;font-weight:normal;transform:scaleY(1.08);transform-origin:0 3px;">7.9</div>
<svg style="position:absolute;left:284.00px;top:350.10px;" width="19" height="19" viewBox="0 0 19 19"><circle cx="9.5" cy="9.5" r="8.4" fill="none" stroke="#4471b0" stroke-width="0.95"/><path d="M6.8,7.3 Q6.8,4.3 9.7,4.3 Q12.6,4.3 12.6,6.9 Q12.6,8.4 11,9.3 Q9.8,10 9.8,11.6" fill="none" stroke="#0f3f8a" stroke-width="2"/><circle cx="9.8" cy="13.5" r="1.2" fill="#0f3f8a"/></svg>
<div class="t" style="left:93.50px;width:400px;text-align:center;top:370px;font-size:4.8px;line-height:4.8px;color:#666;font-weight:normal;transform:scaleY(1.08);transform-origin:0 3px;">10.9.0.10</div>
<svg style="position:absolute;left:287.75px;top:376.15px;" width="3.5" height="3.5" viewBox="0 0 3.5 3.5"><circle cx="1.75" cy="1.75" r="1.75" fill="#2c9a2c"/></svg>
<div class="t" style="left:293.15px;top:377px;font-size:4.8px;line-height:4.8px;color:#555;font-weight:normal;transform:scaleY(1.08);transform-origin:0 3px;">3.5</div>
<svg style="position:absolute;left:325.50px;top:350.10px;" width="19" height="19" viewBox="0 0 19 19"><circle cx="9.5" cy="9.5" r="8.4" fill="none" stroke="#4471b0" stroke-width="0.95"/><path d="M6.8,7.3 Q6.8,4.3 9.7,4.3 Q12.6,4.3 12.6,6.9 Q12.6,8.4 11,9.3 Q9.8,10 9.8,11.6" fill="none" stroke="#0f3f8a" stroke-width="2"/><circle cx="9.8" cy="13.5" r="1.2" fill="#0f3f8a"/></svg>
<div class="t" style="left:135.00px;width:400px;text-align:center;top:370px;font-size:4.8px;line-height:4.8px;color:#666;font-weight:normal;transform:scaleY(1.08);transform-origin:0 3px;">10.4.128.47</div>
<svg style="position:absolute;left:329.25px;top:376.15px;" width="3.5" height="3.5" viewBox="0 0 3.5 3.5"><circle cx="1.75" cy="1.75" r="1.75" fill="#f5c000"/></svg>
<div class="t" style="left:334.65px;top:377px;font-size:4.8px;line-height:4.8px;color:#555;font-weight:normal;transform:scaleY(1.08);transform-origin:0 3px;">5.5</div>
<svg style="position:absolute;left:366.90px;top:350.10px;" width="19" height="19" viewBox="0 0 19 19"><circle cx="9.5" cy="9.5" r="8.4" fill="none" stroke="#4471b0" stroke-width="0.95"/><path d="M6.8,7.3 Q6.8,4.3 9.7,4.3 Q12.6,4.3 12.6,6.9 Q12.6,8.4 11,9.3 Q9.8,10 9.8,11.6" fill="none" stroke="#0f3f8a" stroke-width="2"/><circle cx="9.8" cy="13.5" r="1.2" fill="#0f3f8a"/></svg>
<div class="t" style="left:176.40px;width:400px;text-align:center;top:370px;font-size:4.8px;line-height:4.8px;color:#666;font-weight:normal;transform:scaleY(1.08);transform-origin:0 3px;">192.168.81.5</div>
<svg style="position:absolute;left:408.30px;top:350.10px;" width="19" height="19" viewBox="0 0 19 19"><circle cx="9.5" cy="9.5" r="8.4" fill="none" stroke="#4471b0" stroke-width="0.95"/><path d="M6.8,7.3 Q6.8,4.3 9.7,4.3 Q12.6,4.3 12.6,6.9 Q12.6,8.4 11,9.3 Q9.8,10 9.8,11.6" fill="none" stroke="#0f3f8a" stroke-width="2"/><circle cx="9.8" cy="13.5" r="1.2" fill="#0f3f8a"/></svg>
<div class="t" style="left:217.80px;width:400px;text-align:center;top:370px;font-size:4.8px;line-height:4.8px;color:#666;font-weight:normal;transform:scaleY(1.08);transform-origin:0 3px;">10.4.0.10</div>
<svg style="position:absolute;left:412.05px;top:376.15px;" width="3.5" height="3.5" viewBox="0 0 3.5 3.5"><circle cx="1.75" cy="1.75" r="1.75" fill="#2c9a2c"/></svg>
<div class="t" style="left:417.45px;top:377px;font-size:4.8px;line-height:4.8px;color:#555;font-weight:normal;transform:scaleY(1.08);transform-origin:0 3px;">3.9</div>
<svg style="position:absolute;left:449.70px;top:350.10px;" width="19" height="19" viewBox="0 0 19 19"><circle cx="9.5" cy="9.5" r="8.4" fill="none" stroke="#4471b0" stroke-width="0.95"/><path d="M6.8,7.3 Q6.8,4.3 9.7,4.3 Q12.6,4.3 12.6,6.9 Q12.6,8.4 11,9.3 Q9.8,10 9.8,11.6" fill="none" stroke="#0f3f8a" stroke-width="2"/><circle cx="9.8" cy="13.5" r="1.2" fill="#0f3f8a"/></svg>
<div class="t" style="left:259.20px;width:400px;text-align:center;top:370px;font-size:4.8px;line-height:4.8px;color:#666;font-weight:normal;transform:scaleY(1.08);transform-origin:0 3px;">192.168.56.102</div>
<svg style="position:absolute;left:453.45px;top:376.15px;" width="3.5" height="3.5" viewBox="0 0 3.5 3.5"><circle cx="1.75" cy="1.75" r="1.75" fill="#f5c000"/></svg>
<div class="t" style="left:458.85px;top:377px;font-size:4.8px;line-height:4.8px;color:#555;font-weight:normal;transform:scaleY(1.08);transform-origin:0 3px;">4.9</div>
<svg style="position:absolute;left:491.10px;top:350.10px;" width="19" height="19" viewBox="0 0 19 19"><circle cx="9.5" cy="9.5" r="8.4" fill="none" stroke="#4471b0" stroke-width="0.95"/><path d="M6.8,7.3 Q6.8,4.3 9.7,4.3 Q12.6,4.3 12.6,6.9 Q12.6,8.4 11,9.3 Q9.8,10 9.8,11.6" fill="none" stroke="#0f3f8a" stroke-width="2"/><circle cx="9.8" cy="13.5" r="1.2" fill="#0f3f8a"/></svg>
<div class="t" style="left:300.60px;width:400px;text-align:center;top:370px;font-size:4.8px;line-height:4.8px;color:#666;font-weight:normal;transform:scaleY(1.08);transform-origin:0 3px;">192.168.3.4</div>
<svg style="position:absolute;left:600.00px;top:308.00px;" width="24" height="20" viewBox="0 0 24 20"><path d="M3.7,7.4 L7.0,4.5 V6.0 H10.9 V8.8 H7.0 V10.3Z" fill="#17478f"/><path d="M3.7,14.4 L7.0,11.5 V13.0 H10.9 V15.8 H7.0 V17.3Z" fill="#17478f"/><path d="M20,5.4 L16.7,2.5000000000000004 V4.0 H12.8 V6.800000000000001 H16.7 V8.3Z" fill="#17478f"/><path d="M20,12.7 L16.7,9.799999999999999 V11.299999999999999 H12.8 V14.1 H16.7 V15.6Z" fill="#17478f"/></svg>
<div class="t" style="left:412.00px;width:400px;text-align:center;top:328px;font-size:4.8px;line-height:4.8px;color:#666;font-weight:normal;transform:scaleY(1.08);transform-origin:0 3px;">10.4.129.1</div>
<svg style="position:absolute;left:563.60px;top:380.60px;" width="7" height="7" viewBox="0 0 7 7"><path d="M0.5,3.1 L3.1,3.1 L3.1,0.5Z M3.9,0.5 L3.9,3.1 L6.5,3.1Z M0.5,3.9 L3.1,3.9 L3.1,6.5Z M3.9,3.9 L6.5,3.9 L3.9,6.5Z" fill="#4a8ded"/></svg>
<svg style="position:absolute;left:439.40px;top:475.30px;" width="7" height="7" viewBox="0 0 7 7"><circle cx="3.5" cy="3.5" r="2.6" fill="none" stroke="#4a8ded" stroke-width="1.3" stroke-dasharray="2.9 1.18" stroke-dashoffset="-0.59"/></svg>
<svg style="position:absolute;left:244.00px;top:447.10px;" width="16.4" height="14" viewBox="0 0 16.4 14"><rect x="0" y="0" width="16.4" height="11.2" rx="0.9" fill="#17478f"/><rect x="5.5" y="11.9" width="5.4" height="1.6" fill="#17478f"/><path d="M5,2.9 L7.8,2.5 V5.4 H5Z M8.3,2.4 L11.6,1.9 V5.4 H8.3Z M5,5.9 H7.8 V8.8 L5,8.4Z M8.3,5.9 H11.6 V9.3 L8.3,8.9Z" fill="#fff"/></svg>
<div class="t" style="left:52.20px;width:400px;text-align:center;top:464px;font-size:4.8px;line-height:4.8px;color:#666;font-weight:normal;transform:scaleY(1.08);transform-origin:0 3px;">esf1</div>
<svg style="position:absolute;left:285.30px;top:447.10px;" width="16.4" height="14" viewBox="0 0 16.4 14"><rect x="0" y="0" width="16.4" height="11.2" rx="0.9" fill="#17478f"/><rect x="5.5" y="11.9" width="5.4" height="1.6" fill="#17478f"/><path d="M5,2.9 L7.8,2.5 V5.4 H5Z M8.3,2.4 L11.6,1.9 V5.4 H8.3Z M5,5.9 H7.8 V8.8 L5,8.4Z M8.3,5.9 H11.6 V9.3 L8.3,8.9Z" fill="#fff"/></svg>
<div class="t" style="left:93.50px;width:400px;text-align:center;top:464px;font-size:4.8px;line-height:4.8px;color:#666;font-weight:normal;transform:scaleY(1.08);transform-origin:0 3px;">dfir-win7-x64</div>
<svg style="position:absolute;left:287.75px;top:470.75px;" width="3.5" height="3.5" viewBox="0 0 3.5 3.5"><circle cx="1.75" cy="1.75" r="1.75" fill="#f08c00"/></svg>
<div class="t" style="left:293.15px;top:471px;font-size:4.8px;line-height:4.8px;color:#555;font-weight:normal;transform:scaleY(1.08);transform-origin:0 3px;">7</div>
<svg style="position:absolute;left:326.80px;top:447.10px;" width="16.4" height="14" viewBox="0 0 16.4 14"><rect x="0" y="0" width="16.4" height="11.2" rx="0.9" fill="#17478f"/><rect x="5.5" y="11.9" width="5.4" height="1.6" fill="#17478f"/><path d="M5,2.9 L7.8,2.5 V5.4 H5Z M8.3,2.4 L11.6,1.9 V5.4 H8.3Z M5,5.9 H7.8 V8.8 L5,8.4Z M8.3,5.9 H11.6 V9.3 L8.3,8.9Z" fill="#fff"/></svg>
<div class="t" style="left:135.00px;width:400px;text-align:center;top:464px;font-size:4.8px;line-height:4.8px;color:#666;font-weight:normal;transform:scaleY(1.08);transform-origin:0 3px;">win-2012-r2-1</div>
<svg style="position:absolute;left:329.25px;top:470.75px;" width="3.5" height="3.5" viewBox="0 0 3.5 3.5"><circle cx="1.75" cy="1.75" r="1.75" fill="#f08c00"/></svg>
<div class="t" style="left:334.65px;top:471px;font-size:4.8px;line-height:4.8px;color:#555;font-weight:normal;transform:scaleY(1.08);transform-origin:0 3px;">7</div>
<svg style="position:absolute;left:368.20px;top:447.10px;" width="16.4" height="14" viewBox="0 0 16.4 14"><rect x="0" y="0" width="16.4" height="11.2" rx="0.9" fill="#17478f"/><rect x="5.5" y="11.9" width="5.4" height="1.6" fill="#17478f"/><path d="M5,2.9 L7.8,2.5 V5.4 H5Z M8.3,2.4 L11.6,1.9 V5.4 H8.3Z M5,5.9 H7.8 V8.8 L5,8.4Z M8.3,5.9 H11.6 V9.3 L8.3,8.9Z" fill="#fff"/></svg>
<div class="t" style="left:176.40px;width:400px;text-align:center;top:464px;font-size:4.8px;line-height:4.8px;color:#666;font-weight:normal;transform:scaleY(1.08);transform-origin:0 3px;">dfir-win7-x86</div>
<svg style="position:absolute;left:370.65px;top:470.75px;" width="3.5" height="3.5" viewBox="0 0 3.5 3.5"><circle cx="1.75" cy="1.75" r="1.75" fill="#f08c00"/></svg>
<div class="t" style="left:376.05px;top:471px;font-size:4.8px;line-height:4.8px;color:#555;font-weight:normal;transform:scaleY(1.08);transform-origin:0 3px;">7</div>
<svg style="position:absolute;left:409.60px;top:447.10px;" width="16.4" height="14" viewBox="0 0 16.4 14"><rect x="0" y="0" width="16.4" height="11.2" rx="0.9" fill="#17478f"/><rect x="5.5" y="11.9" width="5.4" height="1.6" fill="#17478f"/><path d="M5,2.9 L7.8,2.5 V5.4 H5Z M8.3,2.4 L11.6,1.9 V5.4 H8.3Z M5,5.9 H7.8 V8.8 L5,8.4Z M8.3,5.9 H11.6 V9.3 L8.3,8.9Z" fill="#fff"/></svg>
<div class="t" style="left:217.80px;width:400px;text-align:center;top:464px;font-size:4.8px;line-height:4.8px;color:#666;font-weight:normal;transform:scaleY(1.08);transform-origin:0 3px;">c-dfir-win7-x86</div>
<svg style="position:absolute;left:412.05px;top:470.75px;" width="3.5" height="3.5" viewBox="0 0 3.5 3.5"><circle cx="1.75" cy="1.75" r="1.75" fill="#f08c00"/></svg>
<div class="t" style="left:417.45px;top:471px;font-size:4.8px;line-height:4.8px;color:#555;font-weight:normal;transform:scaleY(1.08);transform-origin:0 3px;">7</div>
<svg style="position:absolute;left:478.50px;top:445.50px;" width="19" height="17" viewBox="0 0 19 17"><rect x="0.6" y="0.5" width="14" height="3.8" rx="1.2" fill="#17478f"/><rect x="0.6" y="5.3" width="14" height="3.8" rx="1.2" fill="#17478f"/><rect x="0.6" y="10.1" width="14" height="3.8" rx="1.2" fill="#17478f"/><circle cx="2.3" cy="2.4" r="0.5" fill="#fff"/><circle cx="2.3" cy="7.2" r="0.5" fill="#fff"/><circle cx="2.3" cy="12" r="0.5" fill="#fff"/><circle cx="12.6" cy="11.3" r="5.3" fill="#f3f3f3"/><circle cx="12.6" cy="11.3" r="4.5" fill="none" stroke="#17478f" stroke-width="1"/><path d="M10.6,9.6 L12.3,9.3 V11 H10.6Z M12.7,9.2 L14.7,8.9 V11 H12.7Z M10.6,11.5 H12.3 V13.2 L10.6,13Z M12.7,11.5 H14.7 V13.6 L12.7,13.3Z" fill="#17478f"/></svg>
<div class="t" style="left:287.50px;width:400px;text-align:center;top:464px;font-size:4.8px;line-height:4.8px;color:#666;font-weight:normal;transform:scaleY(1.08);transform-origin:0 3px;">testdc1</div>
<svg style="position:absolute;left:481.20px;top:470.70px;" width="3.5" height="3.5" viewBox="0 0 3.5 3.5"><circle cx="1.75" cy="1.75" r="1.75" fill="#f08c00"/></svg>
<div class="t" style="left:487.20px;top:471px;font-size:4.8px;line-height:4.8px;color:#555;font-weight:normal;transform:scaleY(1.08);transform-origin:0 3px;">8</div>
<svg style="position:absolute;left:548.00px;top:447.00px;" width="18" height="14" viewBox="0 0 18 14"><rect x="3.5" y="0.8" width="11.8" height="3.8" rx="1.3" fill="#17478f"/><path d="M4.5,4.4 H14.3 L12.6,7.8 H6.2Z" fill="#17478f"/><rect x="7.6" y="7.6" width="3.6" height="2.6" fill="#17478f"/><circle cx="4.2" cy="9.7" r="3.1" fill="#f3f3f3" stroke="#17478f" stroke-width="1"/><circle cx="14.3" cy="9.7" r="3.1" fill="#f3f3f3" stroke="#17478f" stroke-width="1"/><path d="M1.3,9.7 H7.2 M11.3,9.7 H17.3 M4.2,6.6 V12.8 M14.3,6.6 V12.8" stroke="#17478f" stroke-width="0.6"/></svg>
<div class="t" style="left:357.40px;width:400px;text-align:center;top:464px;font-size:4.8px;line-height:4.8px;color:#666;font-weight:normal;transform:scaleY(1.08);transform-origin:0 3px;">10.1.1.2</div>
<svg style="position:absolute;left:244.00px;top:528.60px;" width="16.4" height="8" viewBox="0 0 16.4 8"><path d="M0.8,6 V1 H2.6 M8.6,1 H15.6 V6" fill="none" stroke="#17478f" stroke-width="1.5"/><circle cx="5.9" cy="3.4" r="2.3" fill="none" stroke="#17478f" stroke-width="1.4"/><path d="M7.6,4.1 H11.6 V6" fill="none" stroke="#17478f" stroke-width="1.1"/></svg>
<svg style="position:absolute;left:285.30px;top:528.60px;" width="16.4" height="8" viewBox="0 0 16.4 8"><path d="M0.8,6 V1 H2.6 M8.6,1 H15.6 V6" fill="none" stroke="#17478f" stroke-width="1.5"/><circle cx="5.9" cy="3.4" r="2.3" fill="none" stroke="#17478f" stroke-width="1.4"/><path d="M7.6,4.1 H11.6 V6" fill="none" stroke="#17478f" stroke-width="1.1"/></svg>
<svg style="position:absolute;left:326.80px;top:528.60px;" width="16.4" height="8" viewBox="0 0 16.4 8"><path d="M0.8,6 V1 H2.6 M8.6,1 H15.6 V6" fill="none" stroke="#17478f" stroke-width="1.5"/><circle cx="5.9" cy="3.4" r="2.3" fill="none" stroke="#17478f" stroke-width="1.4"/><path d="M7.6,4.1 H11.6 V6" fill="none" stroke="#17478f" stroke-width="1.1"/></svg>
<svg style="position:absolute;left:368.20px;top:528.60px;" width="16.4" height="8" viewBox="0 0 16.4 8"><path d="M0.8,6 V1 H2.6 M8.6,1 H15.6 V6" fill="none" stroke="#17478f" stroke-width="1.5"/><circle cx="5.9" cy="3.4" r="2.3" fill="none" stroke="#17478f" stroke-width="1.4"/><path d="M7.6,4.1 H11.6 V6" fill="none" stroke="#17478f" stroke-width="1.1"/></svg>
<svg style="position:absolute;left:409.60px;top:528.60px;" width="16.4" height="8" viewBox="0 0 16.4 8"><path d="M0.8,6 V1 H2.6 M8.6,1 H15.6 V6" fill="none" stroke="#17478f" stroke-width="1.5"/><circle cx="5.9" cy="3.4" r="2.3" fill="none" stroke="#17478f" stroke-width="1.4"/><path d="M7.6,4.1 H11.6 V6" fill="none" stroke="#17478f" stroke-width="1.1"/></svg>
<svg style="position:absolute;left:451.00px;top:528.60px;" width="16.4" height="8" viewBox="0 0 16.4 8"><path d="M0.8,6 V1 H2.6 M8.6,1 H15.6 V6" fill="none" stroke="#17478f" stroke-width="1.5"/><circle cx="5.9" cy="3.4" r="2.3" fill="none" stroke="#17478f" stroke-width="1.4"/><path d="M7.6,4.1 H11.6 V6" fill="none" stroke="#17478f" stroke-width="1.1"/></svg>
<svg style="position:absolute;left:492.40px;top:528.60px;" width="16.4" height="8" viewBox="0 0 16.4 8"><path d="M0.8,6 V1 H2.6 M8.6,1 H15.6 V6" fill="none" stroke="#17478f" stroke-width="1.5"/><circle cx="5.9" cy="3.4" r="2.3" fill="none" stroke="#17478f" stroke-width="1.4"/><path d="M7.6,4.1 H11.6 V6" fill="none" stroke="#17478f" stroke-width="1.1"/></svg>
<svg style="position:absolute;left:533.80px;top:528.60px;" width="16.4" height="8" viewBox="0 0 16.4 8"><path d="M0.8,6 V1 H2.6 M8.6,1 H15.6 V6" fill="none" stroke="#17478f" stroke-width="1.5"/><circle cx="5.9" cy="3.4" r="2.3" fill="none" stroke="#17478f" stroke-width="1.4"/><path d="M7.6,4.1 H11.6 V6" fill="none" stroke="#17478f" stroke-width="1.1"/></svg>
<svg style="position:absolute;left:575.20px;top:528.60px;" width="16.4" height="8" viewBox="0 0 16.4 8"><path d="M0.8,6 V1 H2.6 M8.6,1 H15.6 V6" fill="none" stroke="#17478f" stroke-width="1.5"/><circle cx="5.9" cy="3.4" r="2.3" fill="none" stroke="#17478f" stroke-width="1.4"/><path d="M7.6,4.1 H11.6 V6" fill="none" stroke="#17478f" stroke-width="1.1"/></svg>
<svg style="position:absolute;left:616.80px;top:528.60px;" width="16.4" height="8" viewBox="0 0 16.4 8"><path d="M0.8,6 V1 H2.6 M8.6,1 H15.6 V6" fill="none" stroke="#17478f" stroke-width="1.5"/><circle cx="5.9" cy="3.4" r="2.3" fill="none" stroke="#17478f" stroke-width="1.4"/><path d="M7.6,4.1 H11.6 V6" fill="none" stroke="#17478f" stroke-width="1.1"/></svg>
<svg style="position:absolute;left:686.20px;top:528.60px;" width="16.4" height="8" viewBox="0 0 16.4 8"><path d="M0.8,6 V1 H2.6 M8.6,1 H15.6 V6" fill="none" stroke="#17478f" stroke-width="1.5"/><circle cx="5.9" cy="3.4" r="2.3" fill="none" stroke="#17478f" stroke-width="1.4"/><path d="M7.6,4.1 H11.6 V6" fill="none" stroke="#17478f" stroke-width="1.1"/></svg>
<svg style="position:absolute;left:0.00px;top:0.00px;" width="23" height="24" viewBox="0 0 23 24"><path d="M11.9,8.7 L4.9,12.2 L11.9,15.9" fill="none" stroke="#ffffff" stroke-width="1.7" stroke-linecap="round" stroke-linejoin="round"/><path d="M14.8,6.6 Q19.6,12.1 15,17.8" fill="none" stroke="#ffffff" stroke-width="1.6" stroke-linecap="round"/></svg>
<svg style="position:absolute;left:0.00px;top:25.00px;" width="23" height="25" viewBox="0 0 23 25"><g fill="none" stroke="#ffffff" stroke-width="0.85"><rect x="9.15" y="7.6" width="3.5" height="2.7" rx="0.8"/><path d="M10.9,10.3 V12.5 M5.75,15.3 V12.5 H16.2 V15.3 M10.9,12.5 V15.3"/><rect x="4.3" y="15.3" width="2.9" height="2.7" rx="0.8"/><rect x="9.45" y="15.3" width="2.9" height="2.7" rx="0.8"/><rect x="14.7" y="15.3" width="3.0" height="2.7" rx="0.8"/></g></svg>
<svg style="position:absolute;left:0.00px;top:50.00px;" width="23" height="25" viewBox="0 0 23 25"><g fill="none" stroke="#ffffff" stroke-width="0.85" stroke-linejoin="round"><path d="M5.2,11.5 L8.9,8 L12.8,10.8 L16.6,8"/><rect x="4.5" y="14.7" width="1.7" height="3.4" rx="0.6"/><rect x="8.6" y="11.7" width="1.6" height="6.4" rx="0.6"/><rect x="12.3" y="14.7" width="1.5" height="3.4" rx="0.6"/><rect x="15.7" y="11.7" width="1.7" height="6.4" rx="0.6"/></g><g fill="#ffffff"><circle cx="5.2" cy="11.5" r="0.9"/><circle cx="8.9" cy="8" r="0.9"/><circle cx="12.8" cy="10.8" r="0.9"/><circle cx="16.6" cy="8" r="0.9"/></g></svg>
<svg style="position:absolute;left:0.00px;top:75.00px;" width="23" height="25" viewBox="0 0 23 25"><g fill="none" stroke="#ffffff" stroke-width="0.85"><path d="M7.6,9 V8.1 Q7.6,7.1 8.6,7.1 H16 Q17,7.1 17,8.1 V14.5 Q17,15.5 16,15.5 H15.1"/><rect x="5.4" y="9.3" width="9.6" height="9.1" rx="1.3"/><path d="M5.4,12.3 H15"/></g></svg>
<svg style="position:absolute;left:0.00px;top:100.00px;" width="23" height="25" viewBox="0 0 23 25"><g fill="none" stroke="#ffffff" stroke-width="0.8" stroke-linejoin="round"><path d="M7.23,8.95 L7.49,7.72 L9.51,7.72 L9.77,8.95 L10.59,9.42 L11.79,9.03 L12.80,10.78 L11.87,11.63 L11.87,12.57 L12.80,13.42 L11.79,15.17 L10.59,14.78 L9.77,15.25 L9.51,16.48 L7.49,16.48 L7.23,15.25 L6.41,14.78 L5.21,15.17 L4.20,13.42 L5.13,12.57 L5.13,11.63 L4.20,10.78 L5.21,9.03 L6.41,9.42Z"/><circle cx="8.5" cy="12.1" r="1.8"/><circle cx="15.6" cy="8.9" r="1.7"/><circle cx="15.6" cy="15.6" r="1.7"/><path d="M12.4,10.6 L14.1,9.6 M12.4,13.6 L14.1,14.6"/></g><path d="M8,11.2 L9.4,12.1 L8,13Z" fill="#ffffff"/></svg>
<svg style="position:absolute;left:0.00px;top:490.60px;" width="23" height="20" viewBox="0 0 23 20"><g fill="none" stroke="#ffffff" stroke-width="0.85"><circle cx="11.1" cy="6.6" r="2.6"/><path d="M6.3,15.6 V13.2 Q6.3,10.9 8.6,10.9 H13.8 Q16.1,10.9 16.1,13.2 V15.6Z"/></g></svg>
<svg style="position:absolute;left:0.00px;top:515.00px;" width="23" height="16" viewBox="0 0 23 16"><g fill="none" stroke="#ffffff" stroke-width="0.85"><path d="M8,7.1 L10.3,9.9 L8,12.7 M11.2,7.1 L13.5,9.9 L11.2,12.7"/></g></svg>
<div style="position:absolute;left:0.00px;top:0.00px;width:952.00px;height:1.00px;background:#bcbcbc"></div>
<div style="position:absolute;left:23.60px;top:1.00px;width:928.00px;height:1.00px;background:#dedede"></div>
<div style="position:absolute;left:951.00px;top:0.00px;width:1.00px;height:535.00px;background:#bdbdbd"></div>
<div style="position:absolute;left:0.00px;top:533.60px;width:952.00px;height:1.40px;background:#c4c4c4"></div>
</body></html>
